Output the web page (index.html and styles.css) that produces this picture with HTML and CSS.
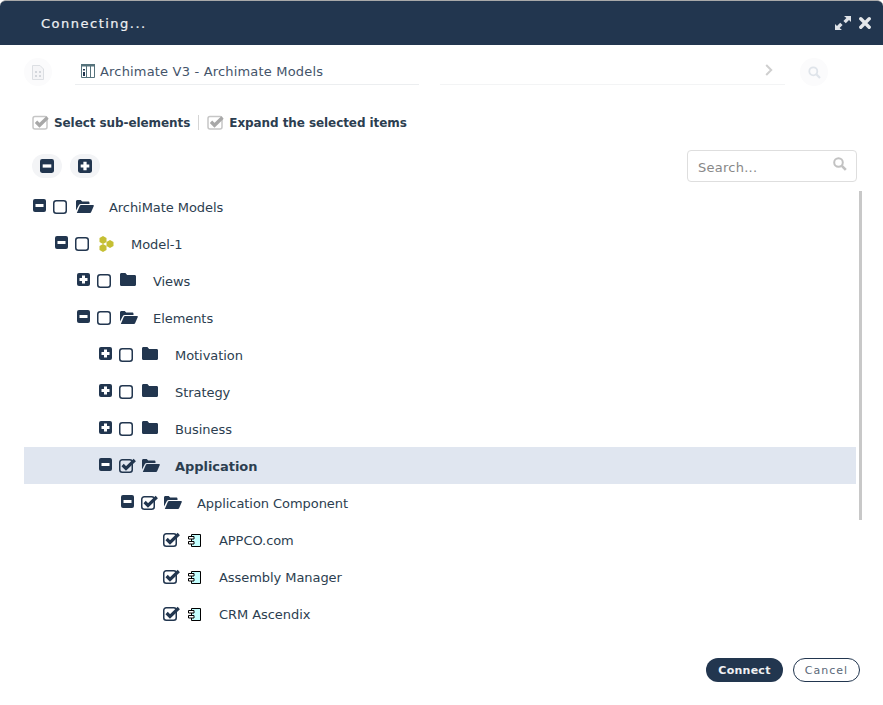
FILE: index.html
```html
<!DOCTYPE html>
<html lang="en">
<head>
<meta charset="utf-8">
<title>Connecting...</title>
<link rel="stylesheet" href="styles.css">
</head>
<body>
<svg class="defs" width="0" height="0" aria-hidden="true">
  <defs>
    <symbol id="minus" viewBox="0 0 13 13"><rect width="13" height="13" rx="2" fill="#22364f"/><rect x="2.5" y="5" width="8" height="3" fill="#fff"/></symbol>
    <symbol id="plus" viewBox="0 0 13 13"><rect width="13" height="13" rx="2" fill="#22364f"/><path d="M5 2.500h3V5h2.500v3H8v2.500H5V8H2.500V5H5z" fill="#fff"/></symbol>
    <symbol id="box" viewBox="0 0 14 14"><rect x=".75" y=".75" width="12.5" height="12.5" rx="2.5" fill="#fff" stroke="#22364f" stroke-width="1.5"/></symbol>
    <symbol id="open" viewBox="0 0 18 13"><path d="M0 1.500C0 .6.600 0 1.400 0h3.300l1.500 1.500h5.900c.9 0 1.400.5 1.400 1.400V4H4.800c-.9 0-1.500.4-1.900 1.100L0 10.500z" fill="#22364f"/><path d="M4 5.600c.2-.4.600-.6 1-.6h12c.7 0 1.100.5.800 1.100l-2.600 5.900c-.2.600-.7 1-1.300 1H.8z" fill="#22364f"/></symbol>
    <symbol id="folder" viewBox="0 0 16 13"><path d="M0 1.500C0 .6.600 0 1.400 0h4l1.700 2h7.500c.8 0 1.400.6 1.400 1.400v8.100c0 .9-.6 1.500-1.400 1.500H1.400C.6 13 0 12.400 0 11.500z" fill="#22364f"/></symbol>
    <symbol id="check" viewBox="0 0 18 15"><rect x=".75" y="1.750" width="12.500" height="12.500" rx="2.500" fill="none" stroke="#22364f" stroke-width="1.500"/><path d="M3.600 7l3.400 3.400L15.800 2" fill="none" stroke="#22364f" stroke-width="3.200"/></symbol>
    <symbol id="component" viewBox="0 0 13 13"><path d="M3.500.5h9v12h-9z" fill="#c4ffff" stroke="#000"/><path d="M.5 2.500h5.500v2.500H.5zM.5 7.500h5.500V10H.5z" fill="#fff" stroke="#000"/></symbol>
    <symbol id="soft-check" viewBox="0 0 17 15"><rect x="1" y="1.500" width="14" height="12.500" rx="2" fill="#fff" stroke="#c6c6c6" stroke-width="1.500"/><path d="M4 6.800l3.500 3.500L15.500 2.500" fill="none" stroke="#a8a8a8" stroke-width="3.400"/></symbol>
  </defs>
</svg>

<main class="dialog">
  <header class="titlebar">
    <h1 class="title">Connecting...</h1>
    <div class="window-tools">
      <svg width="16" height="14" viewBox="0 0 16 14"><path d="M9 0h7v6l-2-2-3.200 3.200L8.400 5l3-3zM7 14H0V8l2 2 3.200-3.200L7.600 9l-3 3z" fill="#dfe3e8"/></svg>
      <svg width="12" height="12" viewBox="0 0 12 12"><path d="M1.800 1.800l8.400 8.400M10.200 1.800l-8.400 8.400" stroke="#e4e7ea" stroke-width="3.400" stroke-linecap="round"/></svg>
    </div>
  </header>

  <section class="path-bar">
    <span class="round-btn">
      <svg width="12" height="15" viewBox="0 0 12 15"><path d="M.5.500h7.500l3.500 3.500v10.500H.5z" fill="#f5f5f7" stroke="#dcdfe3"/><path d="M3 6h2v2H3zM7 6h2v2H7zM3 10h2v2H3zM7 10h2v2H7z" fill="#d4d7dc"/></svg>
    </span>
    <div class="path-main">
      <svg class="model-icon" width="14" height="14" viewBox="0 0 14 14"><path d="M.5.500h13v13H.5z" fill="#fff" stroke="#56737c"/><path d="M0 0h14v2.500H0z" fill="#56737c"/><path d="M5.500 2v12M9.500 2v12" stroke="#56737c"/><path d="M2 5h2v1.500H2zM2 8h2v4H2z" fill="#22364f"/></svg>
      <span>Archimate V3 - Archimate Models</span>
    </div>
    <div class="path-rest">
      <svg width="8" height="12" viewBox="0 0 8 12"><path d="M1.200 1l5 5-5 5" fill="none" stroke="#cfcfcf" stroke-width="2"/></svg>
    </div>
    <span class="round-btn round-btn-search">
      <svg width="13" height="13" viewBox="0 0 13 13"><circle cx="5.300" cy="5.300" r="4" fill="none" stroke="#dfe4ea" stroke-width="1.800"/><path d="M8.300 8.300l3.700 3.700" stroke="#dfe4ea" stroke-width="2.200"/></svg>
    </span>
  </section>

  <section class="options">
    <svg class="soft-check" width="17" height="15"><use href="#soft-check"/></svg>
    <span class="option-label">Select sub-elements</span>
    <span class="option-sep"></span>
    <svg class="soft-check" width="17" height="15"><use href="#soft-check"/></svg>
    <span class="option-label">Expand the selected items</span>
  </section>

  <section class="tree-tools">
    <span class="pill"><svg width="14" height="14"><use href="#minus"/></svg></span>
    <span class="pill"><svg width="14" height="14"><use href="#plus"/></svg></span>
    <label class="search">
      <span class="search-text">Search...</span>
      <svg width="14" height="14" viewBox="0 0 14 14"><circle cx="5.500" cy="5.500" r="4.300" fill="none" stroke="#c2c2c2" stroke-width="2"/><path d="M8.800 8.800l4 4" stroke="#c2c2c2" stroke-width="2.600"/></svg>
    </label>
  </section>

  <section class="tree-wrap">
    <ul class="tree">
      <li class="row lvl0"><svg class="tg"><use href="#minus"/></svg><svg class="cb"><use href="#box"/></svg><svg class="ic-open"><use href="#open"/></svg><span class="name">ArchiMate Models</span></li>
      <li class="row lvl1"><svg class="tg"><use href="#minus"/></svg><svg class="cb"><use href="#box"/></svg>
        <svg class="ic-model" viewBox="0 0 15 16"><path d="M4 0l3.500 2v4L4 8 .5 6V2zM4 8l3.500 2v4L4 16 .5 14v-4zM11 4l3.500 2v4L11 12l-3.500-2V6z" fill="#c5bf33"/></svg><span class="name">Model-1</span></li>
      <li class="row lvl2"><svg class="tg"><use href="#plus"/></svg><svg class="cb"><use href="#box"/></svg><svg class="ic-folder"><use href="#folder"/></svg><span class="name">Views</span></li>
      <li class="row lvl2"><svg class="tg"><use href="#minus"/></svg><svg class="cb"><use href="#box"/></svg><svg class="ic-open"><use href="#open"/></svg><span class="name">Elements</span></li>
      <li class="row lvl3"><svg class="tg"><use href="#plus"/></svg><svg class="cb"><use href="#box"/></svg><svg class="ic-folder"><use href="#folder"/></svg><span class="name">Motivation</span></li>
      <li class="row lvl3"><svg class="tg"><use href="#plus"/></svg><svg class="cb"><use href="#box"/></svg><svg class="ic-folder"><use href="#folder"/></svg><span class="name">Strategy</span></li>
      <li class="row lvl3"><svg class="tg"><use href="#plus"/></svg><svg class="cb"><use href="#box"/></svg><svg class="ic-folder"><use href="#folder"/></svg><span class="name">Business</span></li>
      <li class="row lvl3 selected"><svg class="tg"><use href="#minus"/></svg><svg class="cb-on"><use href="#check"/></svg><svg class="ic-open"><use href="#open"/></svg><span class="name">Application</span></li>
      <li class="row lvl4"><svg class="tg"><use href="#minus"/></svg><svg class="cb-on"><use href="#check"/></svg><svg class="ic-open"><use href="#open"/></svg><span class="name">Application Component</span></li>
      <li class="row lvl5"><svg class="cb-on"><use href="#check"/></svg><svg class="ic-comp"><use href="#component"/></svg><span class="name">APPCO.com</span></li>
      <li class="row lvl5"><svg class="cb-on"><use href="#check"/></svg><svg class="ic-comp"><use href="#component"/></svg><span class="name">Assembly Manager</span></li>
      <li class="row lvl5"><svg class="cb-on"><use href="#check"/></svg><svg class="ic-comp"><use href="#component"/></svg><span class="name">CRM Ascendix</span></li>
    </ul>
    <div class="scrollbar"></div>
  </section>

  <footer class="actions">
    <button class="btn btn-primary" type="button">Connect</button>
    <button class="btn btn-outline" type="button">Cancel</button>
  </footer>
</main>
</body>
</html>
```

FILE: styles.css
```css
* { box-sizing: border-box; }
html, body { margin: 0; padding: 0; background: #fff; }
body {
  width: 883px;
  height: 705px;
  overflow: hidden;
  font-family: "DejaVu Sans", sans-serif;
  font-size: 13px;
  color: #2c3e50;
}
.defs { display: block; height: 0; }
.dialog { width: 883px; height: 705px; display: flex; flex-direction: column; }

.titlebar {
  height: 45px;
  flex: none;
  background: #22364f;
  border-top: 1px solid #a9a9a9;
  border-radius: 6px 6px 0 0;
  display: flex;
  align-items: center;
  justify-content: space-between;
  padding: 0 12px 0 41px;
}
.title {
  margin: 0;
  color: #eef0f2;
  font-size: 13px;
  font-weight: normal;
  letter-spacing: 1.5px;
  -webkit-text-stroke: .2px #eef0f2;
}
.window-tools { display: flex; align-items: center; gap: 8px; margin-top: -1px; }

.path-bar {
  height: 55px;
  flex: none;
  display: flex;
  align-items: flex-start;
  padding: 13px 0 0 24px;
}
.round-btn {
  width: 28px;
  height: 28px;
  flex: none;
  border-radius: 50%;
  background: #fbfbfc;
  display: flex;
  align-items: center;
  justify-content: center;
}
.path-main {
  margin-left: 23px;
  width: 344px;
  height: 27px;
  border-bottom: 1px solid #eceef0;
  display: flex;
  align-items: center;
  padding-left: 6px;
  color: #44546a;
  letter-spacing: .18px;
}
.model-icon { margin-right: 5px; }
.path-rest {
  margin-left: 21px;
  width: 345px;
  height: 27px;
  border-bottom: 1px solid #f3f4f5;
  display: flex;
  align-items: center;
  justify-content: flex-end;
  padding: 0 12px 3px 0;
}
.round-btn-search { margin-left: 15px; }

.options {
  height: 45px;
  flex: none;
  padding-left: 32px;
  display: flex;
  align-items: center;
  font-weight: bold;
  font-size: 12px;
}
.soft-check { flex: none; margin-right: 5px; }
.option-label { color: #2c3e50; letter-spacing: -.08px; }
.option-sep { width: 1px; height: 15px; background: #d5d5d5; margin: 0 8px; }

.tree-tools {
  height: 43px;
  flex: none;
  display: flex;
  align-items: center;
  padding: 0 26px 2px 32px;
  gap: 8px;
}
.pill {
  width: 30px;
  height: 24px;
  border-radius: 12px;
  background: #f3f4f6;
  display: flex;
  align-items: center;
  justify-content: center;
}
.search {
  margin-left: auto;
  width: 170px;
  height: 32px;
  border: 1px solid #dedede;
  border-radius: 4px;
  display: flex;
  align-items: center;
  justify-content: space-between;
  padding: 0 9px 0 10px;
  color: #888;
  background: #fff;
}
.search-text { letter-spacing: .25px; padding-top: 3px; }
.search svg { margin-top: -4px; }

.tree-wrap {
  position: relative;
  height: 445px;
  flex: none;
  overflow: hidden;
}
.tree { list-style: none; margin: 0; padding: 0 27px 0 24px; }
.row {
  height: 37px;
  display: flex;
  align-items: center;
  color: #2c3e50;
}
.selected { background: #e0e6f0; }
.selected .name { font-weight: bold; letter-spacing: -.05px; }
.lvl0 { padding-left: 9px; }
.lvl1 { padding-left: 31px; }
.lvl2 { padding-left: 53px; }
.lvl3 { padding-left: 75px; }
.lvl4 { padding-left: 97px; }
.lvl5 { padding-left: 139px; }

.tg { width: 13px; height: 13px; flex: none; margin: -2px 7px 0 0; }
.cb { width: 14px; height: 14px; flex: none; margin-top: 1px; }
.cb-on { width: 18px; height: 15px; flex: none; margin-right: -4px; }
.ic-open { width: 18px; height: 13px; flex: none; margin: 0 15px 0 9px; }
.ic-folder { width: 16px; height: 13px; flex: none; margin: -2px 17px 0 9px; }
.ic-model { width: 15px; height: 16px; flex: none; margin: 1px 17px 0 10px; }
.ic-comp { width: 13px; height: 13px; flex: none; margin: 2px 18px 0 11px; }
.name { white-space: nowrap; padding-top: 2px; letter-spacing: -.06px; }

.scrollbar {
  position: absolute;
  left: 859px;
  top: 3px;
  width: 3px;
  height: 329px;
  background: #c8c8c8;
}

.actions {
  flex: none;
  display: flex;
  justify-content: flex-end;
  gap: 10px;
  padding: 25px 23px 0 0;
}
.btn {
  height: 24px;
  border-radius: 12px;
  font-family: inherit;
  font-size: 11px;
  padding: 0;
  letter-spacing: 1px;
}
.btn-primary {
  width: 77px;
  background: #22364f;
  border: none;
  color: #f0f1f3;
  font-weight: bold;
  letter-spacing: .25px;
}
.btn-outline {
  width: 67px;
  background: #fff;
  border: 1px solid #22364f;
  color: #5a6878;
}
```
